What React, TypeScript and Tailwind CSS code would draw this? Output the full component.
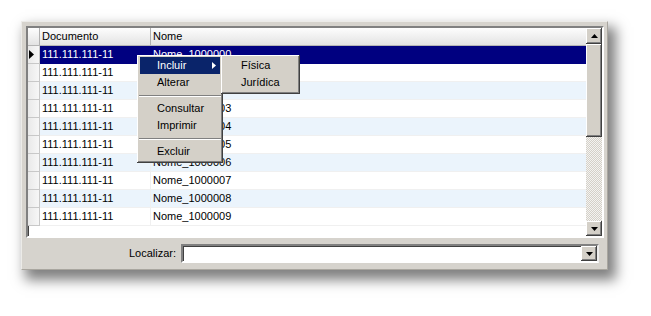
import React from 'react'

const rows = Array.from({ length: 10 }, (_, i) => ({ doc: '111.111.111-11', nome: 'Nome_100000' + i }))

const raised = "shadow-[inset_-1px_-1px_0_#404040,inset_1px_1px_0_#ffffff,inset_-2px_-2px_0_#808080,inset_2px_2px_0_#d4d0c8]"

function Arrow({ dir, color = '#000' }: { dir: 'up' | 'down' | 'right'; color?: string }) {
  if (dir === 'right') {
    return (
      <svg width="4" height="7" viewBox="0 0 4 7"><path d="M0 0 L4 3.5 L0 7 Z" fill={color} /></svg>
    )
  }
  return (
    <svg width="7" height="4" viewBox="0 0 7 4">
      <path d={dir === 'up' ? 'M0 4 L3.5 0 L7 4 Z' : 'M0 0 L7 0 L3.5 4 Z'} fill={color} />
    </svg>
  )
}

function MenuItem({ label, active, sub }: { label: string; active?: boolean; sub?: boolean }) {
  return (
    <div className={"h-[17px] flex items-center pl-[17px] pr-[4px] " + (active ? "bg-[#0a246a] text-white" : "text-black")}>
      <span className="flex-1">{label}</span>
      {sub && <Arrow dir="right" color={active ? '#fff' : '#000'} />}
    </div>
  )
}

function Separator() {
  return (
    <div className="h-[9px] flex flex-col justify-center -mx-[1px]">
      <div className="h-[1px] bg-[#808080]" />
      <div className="h-[1px] bg-white" />
    </div>
  )
}

export default function App() {
  return (
    <div className="relative w-[651px] h-[316px] bg-white pt-[21px] pl-[21px] font-['Liberation_Sans',Arial,sans-serif] text-[11px] leading-none">
      {/* window panel */}
      <div className="w-[587px] h-[249px] bg-[#d6d3cd] border border-t-[#ecebe8] border-l-[#ecebe8] border-r-[#a9a69f] border-b-[#a9a69f] pt-[4px] pl-[4px] pr-[3px] flex flex-col shadow-[6px_8px_12px_2px_rgba(0,0,0,0.5)]">

        {/* grid */}
        <div className="w-[578px] h-[212px] border-2 border-t-[#808080] border-l-[#808080] border-b-white border-r-white shadow-[inset_1px_1px_0_#404040] bg-white flex">
          <div className="flex-1 flex flex-col">
            <div className="h-[18px] flex bg-gradient-to-b from-[#fdfdfd] to-[#e3e3e3] border-b border-[#b5b5b5]">
              <div className="w-[12px] border-r border-[#b0b0b0]" />
              <div className="w-[111px] border-r border-[#b0b0b0] pl-[2px] flex items-center text-black">Documento</div>
              <div className="flex-1 pl-[2px] flex items-center text-black">Nome</div>
            </div>
            {rows.map((r, i) => {
              const sel = i === 0
              const bg = sel ? 'bg-[#000080] text-white' : i % 2 === 0 ? 'bg-[#ebf4fc] text-black' : 'bg-white text-black'
              return (
                <div key={i} className="h-[18px] flex">
                  <div className="w-[12px] bg-gradient-to-r from-[#e9e9e9] to-[#f7f7f7] border-r border-b border-[#c8c8c8] flex items-center pl-[1px]">
                    {sel && <svg width="5" height="9" viewBox="0 0 5 9"><path d="M0 0 L5 4.5 L0 9 Z" fill="#000" /></svg>}
                  </div>
                  <div className={"w-[111px] pl-[2px] flex items-center border-r border-b " + (sel ? 'border-[#000080] ' : 'border-[#f0f0f0] ') + bg}>{r.doc}</div>
                  <div className={"flex-1 pl-[2px] flex items-center border-b " + (sel ? 'border-[#000080] ' : 'border-[#f0f0f0] ') + bg}>{r.nome}</div>
                </div>
              )
            })}
          </div>

          {/* scrollbar */}
          <div className="w-[16px] flex flex-col">
            <div className={"h-[16px] bg-[#d4d0c8] flex items-center justify-center " + raised}><Arrow dir="up" /></div>
            <div className={"h-[93px] bg-[#d4d0c8] " + raised} />
            <div className="flex-1 bg-[#e4e2de] bg-[image:repeating-conic-gradient(#f4f3f1_0_25%,#d4d0c8_0_50%)] bg-[length:2px_2px]" />
            <div className={"h-[15px] bg-[#d4d0c8] flex items-center justify-center " + raised}><Arrow dir="down" /></div>
          </div>
        </div>

        {/* search row */}
        <div className="h-[31px] flex items-center -ml-[4px]">
          <div className="w-[154px] text-right text-black">Localizar:</div>
          <div className="ml-[5px] w-[418px] h-[19px] border-2 border-t-[#808080] border-l-[#808080] border-b-white border-r-[#ececec] shadow-[inset_1px_1px_0_#404040] bg-white flex justify-end">
            <div className={"w-[16px] h-full bg-[#d4d0c8] flex items-center justify-center " + raised}><Arrow dir="down" /></div>
          </div>
        </div>
      </div>

      {/* context menu */}
      <div className={"absolute left-[137px] top-[55px] w-[86px] bg-[#d4d0c8] pt-[2px] pb-[3px] px-[3px] " + raised}>
        <MenuItem label="Incluir" active sub />
        <MenuItem label="Alterar" />
        <Separator />
        <MenuItem label="Consultar" />
        <MenuItem label="Imprimir" />
        <Separator />
        <MenuItem label="Excluir" />
      </div>

      {/* submenu */}
      <div className={"absolute left-[221px] top-[55px] w-[79px] bg-[#d4d0c8] pt-[2px] pb-[3px] px-[3px] " + raised}>
        <MenuItem label="Física" />
        <MenuItem label="Jurídica" />
      </div>
    </div>
  )
}
